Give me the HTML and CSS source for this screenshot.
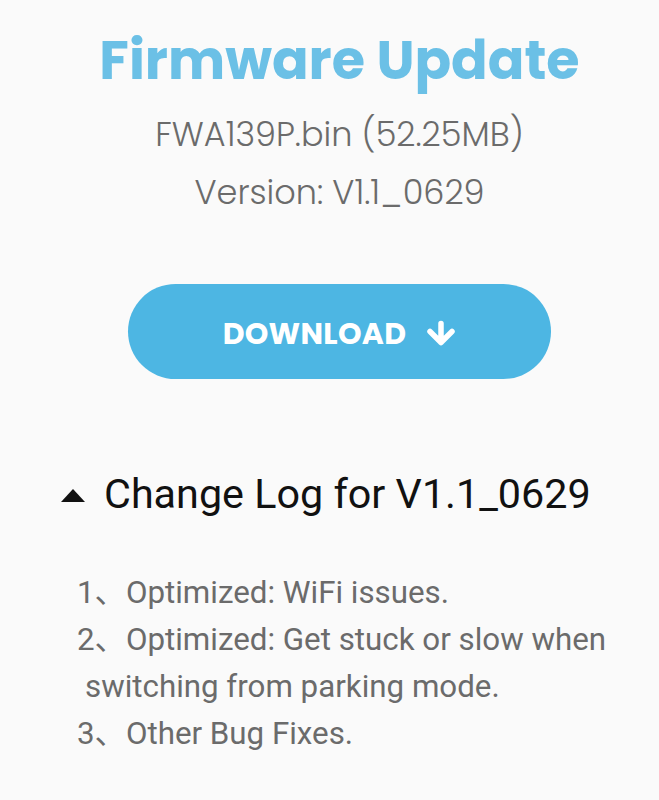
FILE: index.html
```html
<!DOCTYPE html>
<html lang="en">
<head>
    <meta charset="UTF-8">
    <meta name="viewport" content="width=device-width, initial-scale=1.0">
    <title>Firmware Update</title>
    <link rel="stylesheet" href="styles.css">
</head>
<body>
    <div class="page">
        <!-- 固件信息 -->
        <div class="fw-head">
            <h1 class="fw-title">Firmware Update</h1>
            <div class="fw-file">FWA139P.bin (52.25MB)</div>
            <div class="fw-version">Version: V1.1_0629</div>
        </div>

        <div class="btn-row">
            <a class="download-btn" href="#">
                <span>DOWNLOAD</span>
                <svg class="download-icon" viewBox="0 0 30 26" width="30" height="26">
                    <path d="M15 3.5V22.5M4 11.5L15 22.5L26 11.5" fill="none" stroke="#fff" stroke-width="5.5" stroke-linecap="round" stroke-linejoin="round"/>
                </svg>
            </a>
        </div>

        <!-- 更新日志 -->
        <div class="changelog">
            <div class="changelog-head">
                <span class="caret"></span>
                <span>Change Log for V1.1_0629</span>
            </div>
            <ul class="changelog-list">
                <li>1、Optimized: WiFi issues.</li>
                <li>2、Optimized: Get stuck or slow when<br><span class="wrap-indent">switching from parking mode.</span></li>
                <li>3、Other Bug Fixes.</li>
            </ul>
        </div>
    </div>
</body>
</html>
```

FILE: styles.css
```css
html, body {
    margin: 0;
    padding: 0;
    background: #fafafa;
}

.page {
    width: 659px;
    padding: 28px 0 0 20px;
    box-sizing: border-box;
}

.fw-head {
    text-align: center;
    font-family: "Poppins", "Inter", sans-serif;
}

.fw-title {
    margin: 0;
    font-size: 54px;
    font-weight: 700;
    line-height: 64px;
    color: #6bc0e6;
}

.fw-file,
.fw-version {
    font-size: 33.5px;
    font-weight: 300;
    line-height: 58px;
    color: #6b6b6b;
}

.fw-file {
    margin-top: 14px;
}

.btn-row {
    display: flex;
    justify-content: center;
    margin-top: 62px;
}

.download-btn {
    display: flex;
    align-items: center;
    justify-content: center;
    gap: 20px;
    width: 423px;
    height: 95px;
    padding-top: 4px;
    box-sizing: border-box;
    border-radius: 48px;
    background: #4db6e3;
    color: #fff;
    text-decoration: none;
    font-family: "Poppins", "Inter", sans-serif;
    font-weight: 700;
    font-size: 30px;
    letter-spacing: 0.3px;
}

.download-icon {
    display: block;
    margin-top: -2px;
}

.changelog {
    margin-top: 87px;
    padding-left: 41px;
    font-family: "Roboto", "Noto Sans CJK SC", sans-serif;
}

.changelog-head {
    display: flex;
    align-items: center;
    gap: 19px;
    font-size: 41.3px;
    line-height: 56px;
    color: #111;
}

.caret {
    width: 0;
    height: 0;
    border-left: 12.5px solid transparent;
    border-right: 12.5px solid transparent;
    border-bottom: 13px solid #111;
    margin-top: 3px;
}

.changelog-list {
    list-style: none;
    margin: 47px 0 0;
    padding: 0 0 0 16px;
    font-size: 31.3px;
    line-height: 47px;
    color: #6b6b6b;
}

.wrap-indent {
    padding-left: 8px;
}
```
